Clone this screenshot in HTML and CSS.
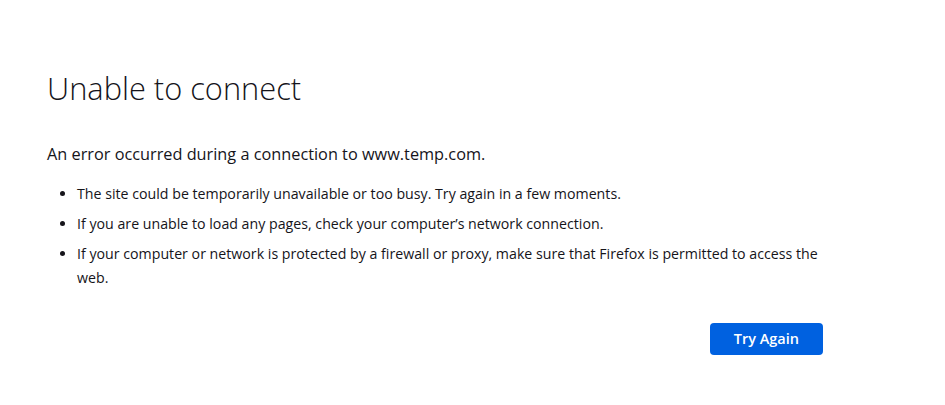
FILE: index.html
```html
<!DOCTYPE html>
<html lang="en">
<head>
    <meta charset="UTF-8">
    <meta name="viewport" content="width=device-width, initial-scale=1.0">
    <title>Problem loading page</title>
    <link rel="stylesheet" href="styles.css">
</head>
<body>
    <div class="container">
        <div class="title">
            <h1 class="title-text">Unable to connect</h1>
        </div>
        <div class="error-content">
            <p class="short-desc">An error occurred during a connection to www.temp.com.</p>
            <ul class="long-desc">
                <li>The site could be temporarily unavailable or too busy. Try again in a few moments.</li>
                <li>If you are unable to load any pages, check your computer’s network connection.</li>
                <li>If your computer or network is protected by a firewall or proxy, make sure that Firefox is permitted to access the web.</li>
            </ul>
        </div>
        <div class="button-container">
            <button class="button primary" id="try-again">Try Again</button>
        </div>
    </div>
</body>
</html>
```

FILE: styles.css
```css
body {
    margin: 0;
    font-family: "Open Sans", sans-serif;
    font-size: 14.2px;
    color: #15141a;
    background-color: #fff;
}
.container {
    width: 776px;
    padding: 70px 0 0 47px;
}
.title-text {
    font-size: 30.8px;
    font-weight: 300;
    line-height: 1.2;
    margin: 0 0 36px;
}
.short-desc {
    font-size: 16.3px;
    margin: 0 0 17px;
}
.long-desc {
    margin: 0;
    padding-left: 30px;
}
.long-desc li {
    line-height: 24px;
    margin-bottom: 6px;
}
.button-container {
    display: flex;
    justify-content: flex-end;
    margin-top: 33px;
}
.button {
    font-family: inherit;
    font-size: 14.5px;
    font-weight: 600;
    padding: 0 24px;
    height: 32px;
    border: none;
    border-radius: 4px;
    color: #fff;
    background-color: #0061e0;
    cursor: pointer;
}
```
